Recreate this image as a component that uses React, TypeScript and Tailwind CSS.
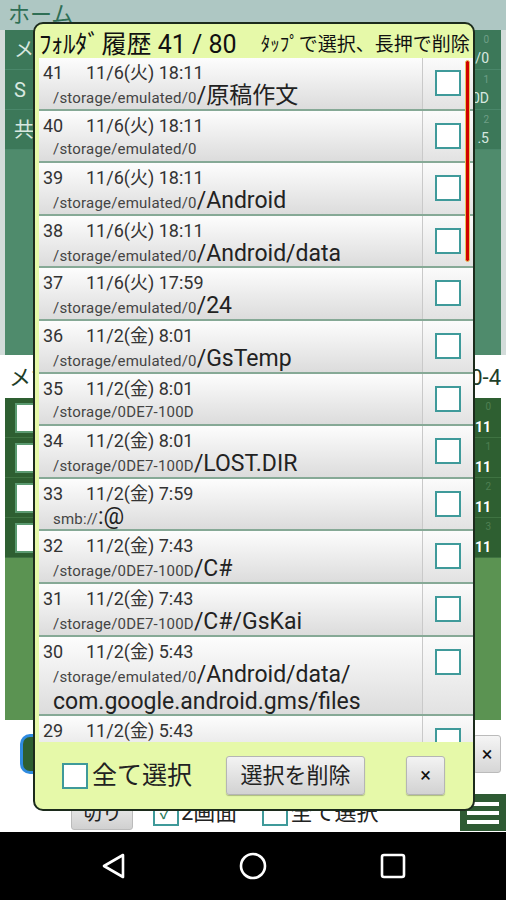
import React from "react";

type Row = { n: string; d: string; s: string; b?: string; h?: string };

const rows: Row[] = [
  { n: "41", d: "11/6(火) 18:11", s: "/storage/emulated/0", b: "/原稿作文" },
  { n: "40", d: "11/6(火) 18:11", s: "/storage/emulated/0" },
  { n: "39", d: "11/6(火) 18:11", s: "/storage/emulated/0", b: "/Android" },
  { n: "38", d: "11/6(火) 18:11", s: "/storage/emulated/0", b: "/Android/data" },
  { n: "37", d: "11/6(火) 17:59", s: "/storage/emulated/0", b: "/24" },
  { n: "36", d: "11/2(金) 8:01", s: "/storage/emulated/0", b: "/GsTemp" },
  { n: "35", d: "11/2(金) 8:01", s: "/storage/0DE7-100D" },
  { n: "34", d: "11/2(金) 8:01", s: "/storage/0DE7-100D", b: "/LOST.DIR" },
  { n: "33", d: "11/2(金) 7:59", s: "smb://", b: ":@" },
  { n: "32", d: "11/2(金) 7:43", s: "/storage/0DE7-100D", b: "/C#" },
  { n: "31", d: "11/2(金) 7:43", s: "/storage/0DE7-100D", b: "/C#/GsKai" },
  { n: "30", d: "11/2(金) 5:43", s: "/storage/emulated/0", b: "/Android/data/", h: "com.google.android.gms/files" },
  { n: "29", d: "11/2(金) 5:43", s: "" },
];

function Box({ cls = "" }: { cls?: string }) {
  return <div className={"w-[26px] h-[26px] border-2 border-[#3f9a9a] bg-white shrink-0 " + cls} />;
}

function HistRow({ r }: { r: Row }) {
  const tall = !!r.h;
  return (
    <div
      className={
        "flex shrink-0 border-b-2 border-[#86a996] " + (tall ? "h-[79px]" : "h-[52.6px]")
      }
    >
      <div className="flex-1 bg-gradient-to-b from-[#fdfdfd] to-[#dcdcdc] pl-[4px] pt-[4px] overflow-hidden">
        <div className="flex items-baseline text-[18px] leading-[22px] text-[#333]">
          <span className="w-[43px]">{r.n}</span>
          <span>{r.d}</span>
        </div>
        <div className="flex items-baseline pl-[10px] leading-[24px] text-[#222]">
          <span className="text-[15px] text-[#444] tracking-[0.2px]">{r.s}</span>
          {r.b && <span className="text-[23px]">{r.b}</span>}
        </div>
        {r.h && <div className="pl-[10px] text-[23px] leading-[26px] text-[#222]">{r.h}</div>}
      </div>
      <div className="w-[51px] border-l border-[#c9c9c9] bg-gradient-to-b from-[#fbfbfb] to-[#e2e2e2] pt-[12px] pl-[12px]">
        <Box />
      </div>
    </div>
  );
}

function GreenRow({ label, top, bottom }: { label: string; top: string; bottom: string }) {
  return (
    <div className="h-[40px] flex items-center justify-between bg-[#3c7859] border-b border-[#4a876a] pl-[5px] pr-[12px]">
      <span className="text-[20px] text-[#d8e8e0] pl-[4px]">{label}</span>
      <div className="flex flex-col items-end leading-none">
        <span className="text-[10px] text-[#6f9f87]">{top}</span>
        <span className="text-[14px] text-[#d8e8e0] mt-[6px]">{bottom}</span>
      </div>
    </div>
  );
}

function CheckRow({ top }: { top: string }) {
  return (
    <div className="h-[40px] flex items-center justify-between bg-[#2e5f31] border-b border-[#3f7342] pl-[10px] pr-[10px]">
      <div className="w-[26px] h-[30px] bg-white border-2 border-[#5a9a70]" />
      <div className="flex flex-col items-end leading-none">
        <span className="text-[10px] text-[#4f7f52]">{top}</span>
        <span className="text-[14px] font-bold text-white mt-[8px]">11</span>
      </div>
    </div>
  );
}

export default function App() {
  return (
    <div className="relative w-[506px] h-[900px] overflow-hidden bg-white font-['Roboto','Noto_Sans_CJK_JP',sans-serif]">
      {/* background app */}
      <div className="h-[832px] flex flex-col bg-[#d3dcda]">
        <div className="h-[30px] bg-[#aec7c3] px-[8px] text-[22px] leading-[30px] text-[#2f6f55] shrink-0">ホーム</div>
        <div className="mx-[5px] h-[325px] bg-[#4f8b6c] flex flex-col shrink-0">
          <GreenRow label="メ" top="0" bottom="0/0" />
          <GreenRow label="S" top="1" bottom="0D" />
          <GreenRow label="共" top="2" bottom="1.5" />
        </div>
        <div className="flex-1 bg-white px-[5px] flex flex-col">
          <div className="h-[43px] flex items-end justify-between pb-[4px] text-[22px] text-[#1f3f2a]">
            <span className="pl-[4px]">メ1</span>
            <span>0-4</span>
          </div>
          <div className="h-[322px] bg-[#5b9352] flex flex-col">
            <CheckRow top="0" />
            <CheckRow top="1" />
            <CheckRow top="2" />
            <CheckRow top="3" />
          </div>
          <div className="flex-1 relative">
            <div className="flex items-center justify-between pt-[14px] pl-[15px]">
              <div className="w-[20px] h-[40px] rounded-l-[10px] border-[3px] border-r-0 border-[#2f8be0] bg-[#2e5f31]" />
              <div className="w-[28px] h-[38px] bg-gradient-to-b from-[#f5f5f5] to-[#d6d6d6] border border-[#bbb] rounded-[3px] flex items-center justify-center text-[20px] text-[#111]">×</div>
            </div>
            <div className="flex items-center mt-[20px] h-[37px]">
              <div className="ml-[66px] w-[62px] h-[34px] bg-gradient-to-b from-[#f2f2f2] to-[#d0d0d0] border border-[#bbb] rounded-[3px] text-center text-[20px] leading-[32px] text-[#222]">切り</div>
              <div className="ml-[20px] w-[26px] h-[26px] border-2 border-[#3f9a9a] bg-white flex items-center justify-center text-[#2a7a5a] text-[18px]">✓</div>
              <span className="ml-[2px] text-[22px] text-[#222]">2画面</span>
              <div className="ml-[25px] w-[26px] h-[26px] border-2 border-[#3f9a9a] bg-white" />
              <span className="ml-[2px] text-[22px] text-[#222]">全て選択</span>
              <div className="ml-auto w-[46px] h-[37px] bg-[#2e5a33] flex flex-col justify-center gap-[5px] px-[7px] -mr-[5px]">
                <div className="h-[4px] bg-white" />
                <div className="h-[4px] bg-white" />
                <div className="h-[4px] bg-white" />
              </div>
            </div>
          </div>
        </div>
      </div>
      {/* nav bar */}
      <div className="h-[68px] bg-black flex items-center justify-between px-[100px]">
        <svg width="26" height="28" viewBox="0 0 26 28">
          <path d="M23 3 L4 14 L23 25 Z" fill="none" stroke="white" strokeWidth="2.6" strokeLinejoin="round" />
        </svg>
        <svg width="28" height="28" viewBox="0 0 28 28">
          <circle cx="14" cy="14" r="12" fill="none" stroke="white" strokeWidth="2.6" />
        </svg>
        <svg width="26" height="26" viewBox="0 0 26 26">
          <rect x="2" y="2" width="22" height="22" rx="2" fill="none" stroke="white" strokeWidth="2.6" />
        </svg>
      </div>

      {/* dialog */}
      <div className="absolute left-[33px] top-[22px] w-[442px] h-[789px] border-2 border-[#1c2b1c] rounded-[10px] bg-[#e6f9a9] flex flex-col overflow-hidden">
        <div className="h-[34px] shrink-0 flex items-end pl-[4px] pb-[0px] text-[#111] whitespace-nowrap">
          <span className="text-[25px] leading-[27px] tracking-[-0.5px]">ﾌｫﾙﾀﾞ</span>
          <span className="text-[25px] leading-[27px] ml-[2px]">履歴 41 / 80</span>
          <span className="text-[19px] leading-[26px] ml-[24px]">ﾀｯﾌﾟで選択、長押で削除</span>
        </div>
        <div className="relative h-[684px] shrink-0 ml-[4px] flex flex-col overflow-hidden bg-white">
          {rows.map((r) => (
            <HistRow key={r.n} r={r} />
          ))}
          <div className="absolute left-[426px] top-[2px] w-[5px] h-[202px] rounded-full bg-[#d10000] border border-[#e9c45a]" />
        </div>
        <div className="flex-1 flex items-center pl-[27px] pr-[28px]">
          <Box />
          <span className="ml-[4px] text-[25px] text-[#222]">全て選択</span>
          <div className="ml-[34px] w-[139px] h-[39px] rounded-[3px] border border-[#b5b5b5] bg-gradient-to-b from-[#f3f3f3] to-[#d2d2d2] text-center text-[22px] leading-[37px] text-[#222] shadow-[0_1px_1px_rgba(0,0,0,0.25)]">
            選択を削除
          </div>
          <div className="ml-auto w-[39px] h-[39px] rounded-[3px] border border-[#b5b5b5] bg-gradient-to-b from-[#f3f3f3] to-[#d2d2d2] text-center text-[20px] leading-[37px] text-[#111] shadow-[0_1px_1px_rgba(0,0,0,0.25)]">
            ×
          </div>
        </div>
      </div>
    </div>
  );
}
